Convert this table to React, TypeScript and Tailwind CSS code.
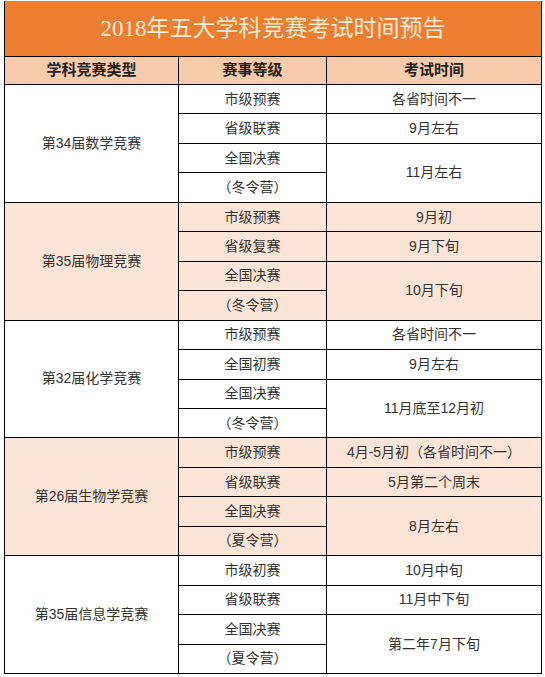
import React from 'react';

type Group = {
  name: string;
  shaded: boolean;
  levels: [string, string, string, string];
  times: [string, string, string];
};

const groups: Group[] = [
  {
    name: '第34届数学竞赛',
    shaded: false,
    levels: ['市级预赛', '省级联赛', '全国决赛', '（冬令营）'],
    times: ['各省时间不一', '9月左右', '11月左右'],
  },
  {
    name: '第35届物理竞赛',
    shaded: true,
    levels: ['市级预赛', '省级复赛', '全国决赛', '（冬令营）'],
    times: ['9月初', '9月下旬', '10月下旬'],
  },
  {
    name: '第32届化学竞赛',
    shaded: false,
    levels: ['市级预赛', '全国初赛', '全国决赛', '（冬令营）'],
    times: ['各省时间不一', '9月左右', '11月底至12月初'],
  },
  {
    name: '第26届生物学竞赛',
    shaded: true,
    levels: ['市级预赛', '省级联赛', '全国决赛', '（夏令营）'],
    times: ['4月-5月初（各省时间不一）', '5月第二个周末', '8月左右'],
  },
  {
    name: '第35届信息学竞赛',
    shaded: false,
    levels: ['市级初赛', '省级联赛', '全国决赛', '（夏令营）'],
    times: ['10月中旬', '11月中下旬', '第二年7月下旬'],
  },
];

const cell = 'flex items-center justify-center border-b border-black';

export default function App() {
  return (
    <div
      className="w-[545px] h-[677px] bg-white pt-[1px] pl-[4px] text-[#333]"
      style={{ fontFamily: '"Liberation Sans", "Noto Sans CJK SC", sans-serif' }}
    >
      <div className="w-[538px] border-x border-black">
        {/* title */}
        <div className="h-[56px] bg-[#ED7D31] border-b border-black flex items-center justify-center">
          <span
            className="text-[23px] text-[#FDEBD6] leading-none"
            style={{ fontFamily: '"Liberation Serif", "Noto Sans CJK SC", serif' }}
          >
            2018年五大学科竞赛考试时间预告
          </span>
        </div>

        {/* header */}
        <div className="grid grid-cols-[174px_148px_1fr] h-[28px] bg-[#F8CBAD] text-[15px] font-bold text-[#222]">
          <div className={`${cell} border-r`}>学科竞赛类型</div>
          <div className={`${cell} border-r`}>赛事等级</div>
          <div className={cell}>考试时间</div>
        </div>

        {/* body */}
        <div className="grid grid-cols-[174px_148px_1fr] grid-rows-[repeat(20,minmax(0,1fr))] h-[589px] text-[14px]">
          {groups.map((g, i) => {
            const bg = g.shaded ? 'bg-[#FCE4D6]' : 'bg-white';
            const r = i * 4 + 1;
            return (
              <React.Fragment key={g.name}>
                <div
                  className={`${cell} ${bg} border-r col-start-1`}
                  style={{ gridRow: `${r} / span 4` }}
                >
                  {g.name}
                </div>
                {g.levels.map((lv, j) => (
                  <div
                    key={lv + j}
                    className={`${cell} ${bg} border-r col-start-2`}
                    style={{ gridRow: `${r + j} / span 1` }}
                  >
                    {lv}
                  </div>
                ))}
                <div className={`${cell} ${bg} col-start-3`} style={{ gridRow: `${r} / span 1` }}>
                  {g.times[0]}
                </div>
                <div className={`${cell} ${bg} col-start-3`} style={{ gridRow: `${r + 1} / span 1` }}>
                  {g.times[1]}
                </div>
                <div className={`${cell} ${bg} col-start-3`} style={{ gridRow: `${r + 2} / span 2` }}>
                  {g.times[2]}
                </div>
              </React.Fragment>
            );
          })}
        </div>
      </div>
    </div>
  );
}
